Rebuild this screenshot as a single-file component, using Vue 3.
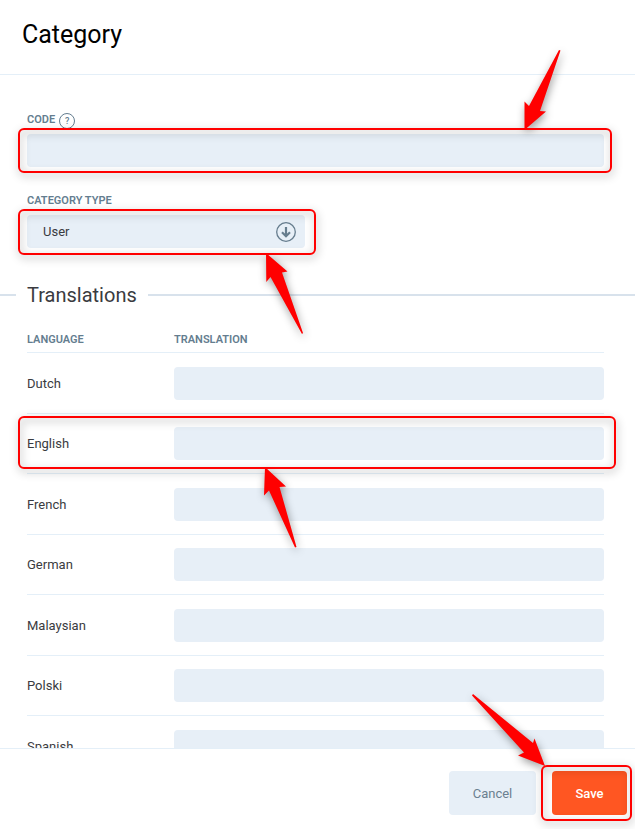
<script setup>
import { ref } from 'vue'

const code = ref('')
const categoryType = ref('User')

const translations = ref([
  { id: 'nl', language: 'Dutch', text: '' },
  { id: 'en', language: 'English', text: '', marked: true },
  { id: 'fr', language: 'French', text: '' },
  { id: 'de', language: 'German', text: '' },
  { id: 'ms', language: 'Malaysian', text: '' },
  { id: 'pl', language: 'Polski', text: '' },
  { id: 'es', language: 'Spanish', text: '' }
])

const handleCancel = () => {
  code.value = ''
  translations.value.forEach((item) => {
    item.text = ''
  })
}
</script>

<template>
  <form class="category-form" @submit.prevent>
    <div class="form-scroll">
      <header class="form-header">
        <h1 class="form-title">Category</h1>
      </header>

      <main class="form-body">
        <div class="field">
          <div class="label-row">
            <label class="field-label" for="code">Code</label>
            <button type="button" class="help-btn">?</button>
          </div>
          <div class="control">
            <input id="code" v-model="code" type="text" class="text-input" />
            <div class="marker marker-code">
              <svg class="arrow" width="36" height="80" viewBox="0 0 36 80">
                <path d="M35 0 L36.5 0.5 L16 61 L22 61.5 L0.5 80 L0.5 51.5 L5 56 Z" />
              </svg>
            </div>
          </div>
        </div>

        <div class="field">
          <div class="label-row">
            <label class="field-label" for="category-type">Category type</label>
          </div>
          <div class="control control-half">
            <select id="category-type" v-model="categoryType" class="select-input">
              <option>User</option>
              <option>System</option>
            </select>
            <svg class="select-icon" width="20" height="20" viewBox="0 0 20 20">
              <circle cx="10" cy="10" r="9.3" fill="none" stroke="#667d8e" stroke-width="1.3" />
              <path d="M10 5v9M6 10.2l4 4 4-4" fill="none" stroke="#667d8e" stroke-width="2.2" />
            </svg>
            <div class="marker marker-type">
              <svg class="arrow" width="38" height="81" viewBox="0 0 38 81">
                <path d="M0 0 L21.5 18.5 L16 19.5 L37 80 L36 81 L4.5 24 L0.3 29 Z" />
              </svg>
            </div>
          </div>
        </div>

        <h2 class="section-title">Translations</h2>

        <table class="translations">
          <thead>
            <tr>
              <th class="language-col">Language</th>
              <th>Translation</th>
            </tr>
          </thead>
          <tbody>
            <tr v-for="item in translations" :key="item.id">
              <td>
                <label :for="item.id">{{ item.language }}</label>
              </td>
              <td>
                <input :id="item.id" v-model="item.text" type="text" class="text-input" />
                <div v-if="item.marked" class="marker marker-row">
                  <svg class="arrow" width="34" height="81" viewBox="0 0 34 81">
                    <path d="M1 0 L22 19.5 L15.5 20 L32.5 80 L31 80.5 L5 23.5 L0 28.5 Z" />
                  </svg>
                </div>
              </td>
            </tr>
          </tbody>
        </table>
      </main>
    </div>

    <footer class="form-footer">
      <button type="button" class="btn btn-cancel" @click="handleCancel">Cancel</button>
      <div class="save-wrapper">
        <button type="submit" class="btn btn-save">Save</button>
        <div class="marker marker-save">
          <svg class="arrow" width="74" height="73" viewBox="0 0 74 73">
            <path d="M1 0 L61 49 L62.5 44.5 L73 72 L46 61.5 L52 58.5 L0 1.5 Z" />
          </svg>
        </div>
      </div>
    </footer>
  </form>
</template>

<style>
body {
  margin: 0;
  background: #fff;
}
</style>

<style scoped>
.category-form {
  display: flex;
  flex-direction: column;
  height: 100vh;
  font-family: Roboto, "Liberation Sans", sans-serif;
  font-size: 13px;
  color: #3a3b40;
}

/* everything above the footer scrolls */
.form-scroll {
  flex: 1;
  min-height: 0;
  overflow-x: hidden;
  overflow-y: auto;
  scrollbar-width: none;
}

.form-header {
  padding: 19px 22px 23px;
  border-bottom: 1px solid #e4eff8;
}

.form-title {
  margin: 0;
  font-size: 25px;
  font-weight: 400;
  line-height: 32px;
  color: #000;
}

.form-body {
  padding: 37px 31px 0 27px;
}

.field {
  margin-bottom: 26px;
}

.label-row {
  display: flex;
  align-items: center;
  gap: 4px;
  height: 18px;
  margin-bottom: 4px;
}

.field-label,
.translations th {
  font-size: 11px;
  font-weight: 600;
  text-transform: uppercase;
  color: #647d8f;
}

.field-label {
  line-height: 16px;
  padding-bottom: 2px;
}

.help-btn {
  width: 16px;
  height: 16px;
  padding: 0;
  border: 1px solid #647d8f;
  border-radius: 50%;
  background: none;
  font-family: inherit;
  font-size: 9px;
  font-weight: 500;
  line-height: 14px;
  color: #647d8f;
  cursor: pointer;
}

.control {
  position: relative;
}

.control-half {
  max-width: 278px;
}

.text-input,
.select-input {
  display: block;
  box-sizing: border-box;
  width: 100%;
  height: 33px;
  padding: 0 16px;
  border: none;
  border-radius: 4px;
  background: #e7eff7;
  font-family: inherit;
  font-size: 13px;
  color: #3a3b40;
}

.select-input {
  appearance: none;
}

.select-icon {
  position: absolute;
  top: 7px;
  right: 9px;
  pointer-events: none;
}

.section-title {
  display: flex;
  align-items: center;
  gap: 11px;
  margin: 34px -31px 0 -27px;
  font-size: 20px;
  font-weight: 400;
  line-height: 26px;
}

.section-title::before,
.section-title::after {
  content: "";
  height: 2px;
  background: #d8e2ec;
}

.section-title::before {
  width: 16px;
}

.section-title::after {
  flex: 1;
}

.translations {
  width: 100%;
  margin-top: 18px;
  border-collapse: separate;
  border-spacing: 0;
}

.translations th {
  height: 26px;
  padding: 0;
  border-bottom: 1px solid #e4eff8;
  text-align: left;
}

.language-col {
  width: 147px;
}

.translations tbody tr {
  position: relative;
}

.translations td {
  height: 33px;
  padding: 14px 0 13px;
  border-bottom: 1px solid #e4eff8;
}

.translations tr:nth-child(even) td {
  padding-top: 13px;
}

.form-footer {
  position: relative;
  z-index: 2;
  display: flex;
  flex-shrink: 0;
  justify-content: flex-end;
  gap: 16px;
  padding: 22px 8px 14px;
  border-top: 1px solid #e4eff8;
}

.btn {
  height: 44px;
  padding: 0 23px;
  border: none;
  border-radius: 4px;
  font-family: inherit;
  font-size: 13px;
  cursor: pointer;
}

.btn-cancel {
  min-width: 87px;
  background: #e7eff7;
  color: #6b7f90;
}

.btn-save {
  min-width: 75px;
  background: #ff5622;
  font-weight: 500;
  color: #fff;
}

.save-wrapper {
  position: relative;
}

/* red frames and arrows laid over the controls */
.marker {
  position: absolute;
  z-index: 1;
  border: 2px solid #f00;
  border-radius: 6px;
  filter: drop-shadow(1px 3px 4px rgba(0, 0, 0, 0.4));
  pointer-events: none;
}

.marker-code {
  inset: -6px -8px -6px -9px;
}

.marker-type {
  inset: -6px -11px -7px -9px;
}

.marker-row {
  inset: 2px -12px 5px -9px;
}

.marker-save {
  inset: -6px -5px -6px -11px;
}

.arrow {
  position: absolute;
  overflow: visible;
  fill: #f00;
}

.marker-code .arrow {
  right: 50px;
  bottom: 100%;
}

.marker-type .arrow {
  top: 100%;
  left: 246px;
}

.marker-row .arrow {
  top: 100%;
  left: 244px;
}

.marker-save .arrow {
  right: 84px;
  bottom: 100%;
}
</style>
